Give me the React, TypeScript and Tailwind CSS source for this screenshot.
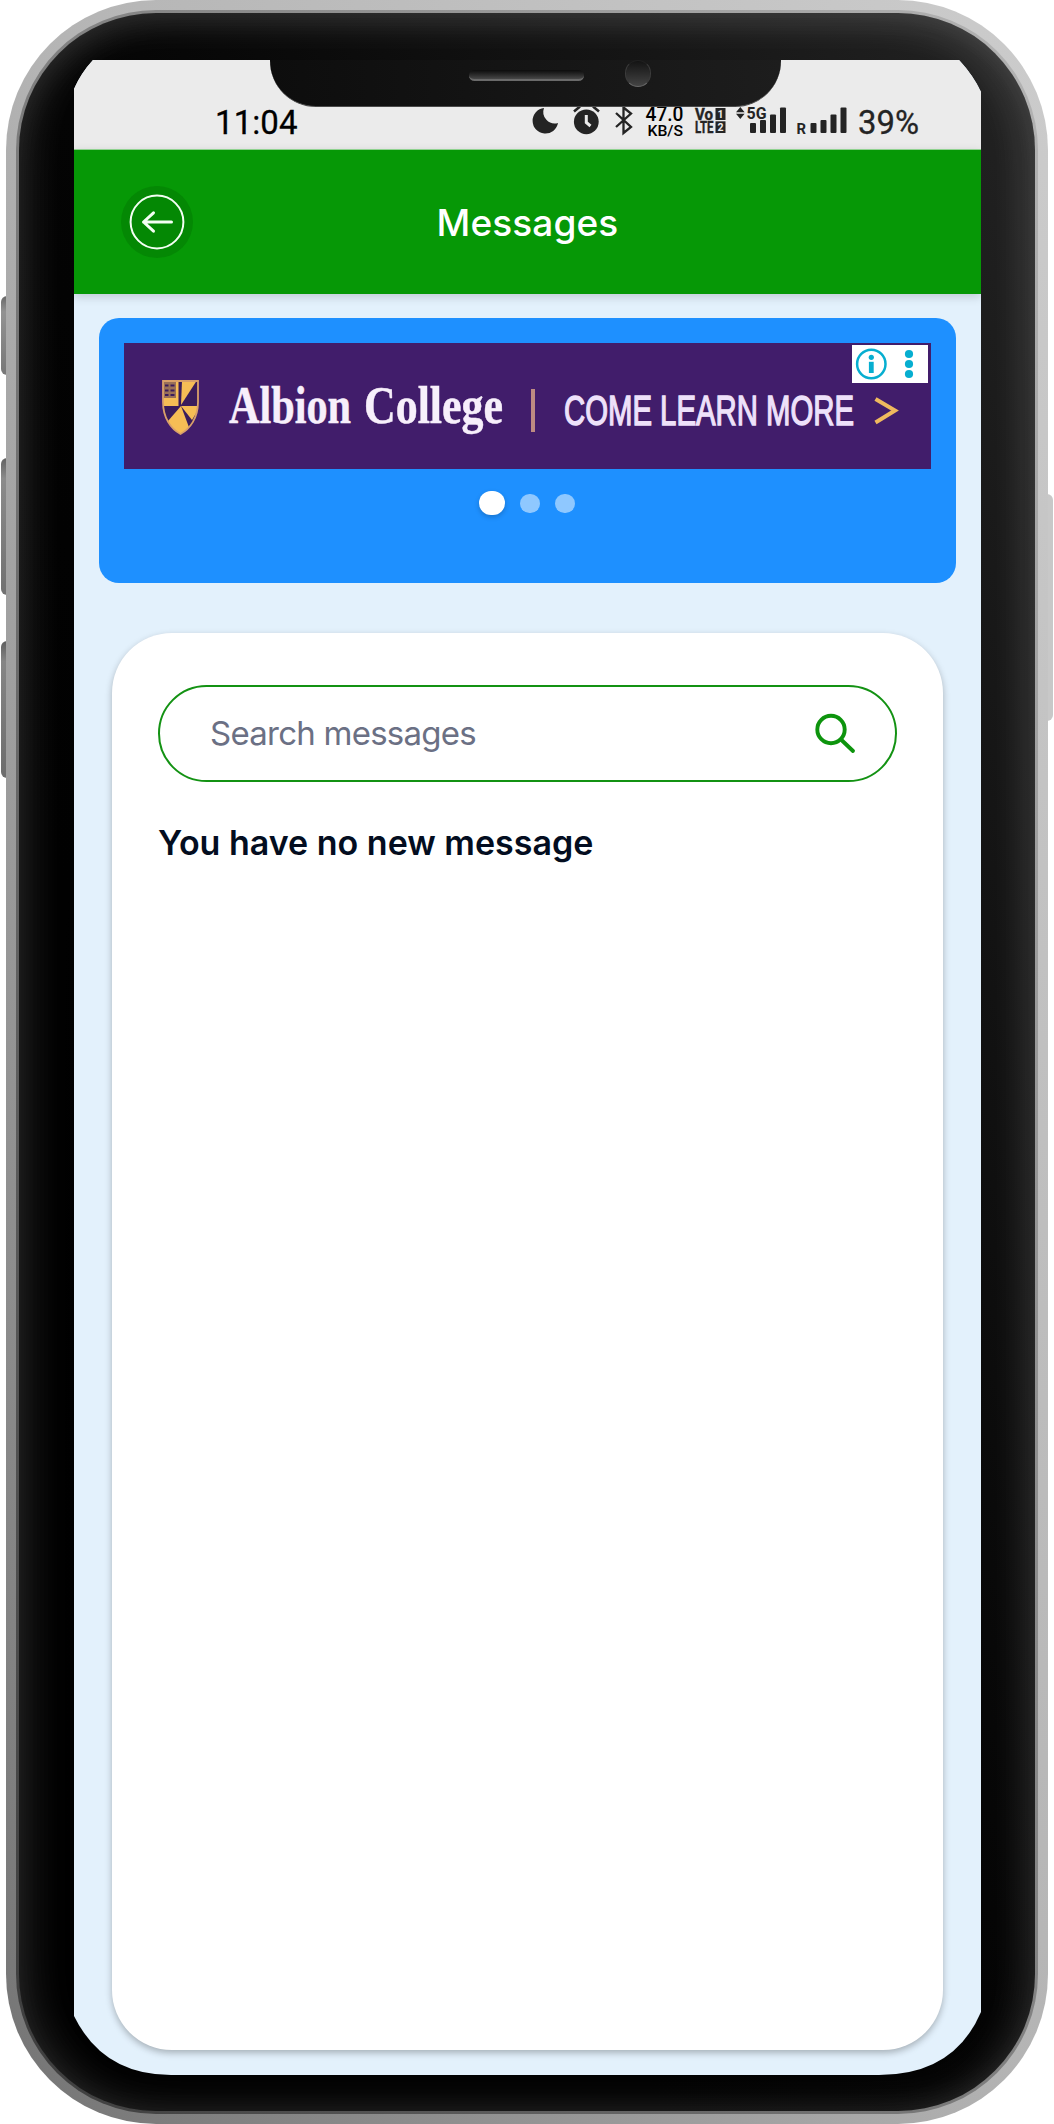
import React from "react";

const INK = "#242424";

function StatusIcon({ x, w, children }: { x: number; w: number; children: React.ReactNode }) {
  return (
    <svg width={w} height="36" viewBox={`${x} 103 ${w} 36`} className="block shrink-0 overflow-visible">
      {children}
    </svg>
  );
}

function Bars({ x }: { x: number }) {
  return (
    <g fill={INK}>
      <rect x={x} y="123" width="6" height="10" rx="1" />
      <rect x={x + 10} y="120" width="6" height="13" rx="1" />
      <rect x={x + 20} y="114.5" width="6" height="18.5" rx="1" />
      <rect x={x + 30} y="107.5" width="6" height="25.5" rx="1" />
    </g>
  );
}

function StatusBar() {
  return (
    <div className="flex h-[89px] items-start bg-[#ebebeb] pl-[140px] pt-[43px]">
      <StatusIcon x={214} w={319}>
        <text x="215" y="134" fontFamily="Roboto" fontSize="33" fill="#000" stroke="#000" strokeWidth="0.3" textLength="82.5">
          11:04
        </text>
      </StatusIcon>
      <StatusIcon x={533} w={40}>
        <path d="M544 108 A12.8 12.8 0 1 0 558 123 A11.5 11.5 0 0 1 544 108Z" fill={INK} />
      </StatusIcon>
      <StatusIcon x={573} w={42}>
        <circle cx="586.3" cy="121.8" r="12.4" fill={INK} />
        <path d="M574 111.5L580 106.5M599 111.5L593 106.5" stroke={INK} strokeWidth="2.6" />
        <path d="M586.3 115V122.5L590.5 126" fill="none" stroke="#ebebeb" strokeWidth="3" />
      </StatusIcon>
      <StatusIcon x={615} w={30}>
        <path d="M616 113L631 127L623.5 133V107.5L631 113.5L616 127" fill="none" stroke={INK} strokeWidth="2.3" />
      </StatusIcon>
      <StatusIcon x={645} w={49}>
        <text x="645.5" y="121" fontFamily="Roboto" fontWeight="500" fontSize="20" fill="#000" textLength="38" lengthAdjust="spacingAndGlyphs">
          47.0
        </text>
        <text x="647.5" y="135.7" fontFamily="Roboto" fontWeight="500" fontSize="15.5" fill="#000" textLength="35.5" lengthAdjust="spacingAndGlyphs">
          KB/S
        </text>
      </StatusIcon>
      <StatusIcon x={694} w={42}>
        <g fontFamily="Roboto" fontWeight="700" fill={INK} stroke={INK} strokeWidth="0.4">
          <text x="695" y="119.8" fontSize="16.5" textLength="18" lengthAdjust="spacingAndGlyphs">Vo</text>
          <text x="695" y="132.8" fontSize="16" textLength="18.5" lengthAdjust="spacingAndGlyphs">LTE</text>
        </g>
        <rect x="715.5" y="108" width="10" height="12" fill={INK} />
        <rect x="715.5" y="121.3" width="10" height="11.7" fill={INK} />
        <g fontFamily="Roboto" fontWeight="700" fontSize="10.5" fill="#ebebeb" textAnchor="middle">
          <text x="720.5" y="117.8">1</text>
          <text x="720.5" y="131">2</text>
        </g>
      </StatusIcon>
      <StatusIcon x={736} w={60}>
        <path d="M736 112.2L740.3 107L744.6 112.2ZM736 113.8L740.3 119L744.6 113.8Z" fill={INK} />
        <Bars x={750} />
        <text x="746.5" y="118.6" fontFamily="Roboto" fontWeight="700" fontSize="16.5" fill={INK} stroke="#ebebeb" strokeWidth="2" paintOrder="stroke" textLength="20" lengthAdjust="spacingAndGlyphs">
          5G
        </text>
      </StatusIcon>
      <StatusIcon x={796} w={62}>
        <text x="796.5" y="133.5" fontFamily="Roboto" fontWeight="700" fontSize="15" fill={INK} textLength="9.5" lengthAdjust="spacingAndGlyphs">
          R
        </text>
        <Bars x={810.5} />
      </StatusIcon>
      <StatusIcon x={858} w={62}>
        <text x="858" y="133.7" fontFamily="Roboto" fontSize="32.5" fill={INK} stroke={INK} strokeWidth="0.3" textLength="61" lengthAdjust="spacingAndGlyphs">
          39%
        </text>
      </StatusIcon>
    </div>
  );
}

function Header() {
  return (
    <header className="relative z-10 grid h-[145px] grid-cols-[1fr_auto_1fr] items-center border-t border-[#8fd28f] bg-[#069806] px-[47px] shadow-[0_3px_9px_rgba(0,0,0,0.16)]">
      <button className="flex size-[72px] items-center justify-center rounded-full bg-[#048804]">
        <svg width="56" height="56" viewBox="0 0 56 56" fill="none" stroke="#f4fff4" strokeLinecap="round" strokeLinejoin="round">
          <circle cx="28" cy="28" r="26.400" strokeWidth="2" />
          <path d="M42.500 28H14.500M24.500 18.800L14.500 28L24.500 37.200" strokeWidth="3" />
        </svg>
      </button>
      <h1 className="whitespace-nowrap font-['Inter'] text-[37px] font-medium leading-none tracking-[0.1px] text-white">Messages</h1>
      <span />
    </header>
  );
}

function Banner() {
  return (
    <div className="relative h-[126px] bg-[#411d6b]">
      <svg width="807" height="126" viewBox="124 343 807 126" className="block overflow-visible">
        <defs>
          <clipPath id="crest">
            <path d="M163 381H198V402C198 418 190 429 180.500 434C171 429 163 418 163 402Z" />
          </clipPath>
        </defs>
        <g clipPath="url(#crest)">
          <rect x="162" y="380" width="38" height="56" fill="#3a1c5c" />
          <path d="M182 381H196.500L181 405Z" fill="#f6bd55" />
          <path d="M163 398H176V382H178.500V406H163Z" fill="#f6bd55" />
          <path d="M181 406H198V410L192 420Z" fill="#f6bd55" />
          <path d="M181 406L168 421L173 430L181 436Z" fill="#f6bd55" />
          <path d="M181 406L181 436L190 430Z" fill="#f6bd55" />
          <rect x="163" y="382" width="13" height="16" fill="#9a7058" />
          <path d="M165 385.500H168.500M170.500 385.500H174.500M165 390.500H168.500M170.500 390.500H174.500M165 395H168.500M170.500 395H174.500" stroke="#3a1c5c" strokeWidth="2.200" />
        </g>
        <path d="M163 381H198V402C198 418 190 429 180.500 434C171 429 163 418 163 402Z" fill="none" stroke="#d9a06a" strokeWidth="1.800" />
        <text x="229" y="422.500" fontFamily="Liberation Serif" fontWeight="700" fontSize="53" fill="#f7effb" stroke="#f7effb" strokeWidth="0.500" textLength="122" lengthAdjust="spacingAndGlyphs">
          Albion
        </text>
        <text x="364" y="422.500" fontFamily="Liberation Serif" fontWeight="700" fontSize="53" fill="#f7effb" stroke="#f7effb" strokeWidth="0.500" textLength="139" lengthAdjust="spacingAndGlyphs">
          College
        </text>
        <rect x="531" y="389" width="4" height="43" fill="#bd8b82" />
        <text x="564" y="425" fontFamily="Liberation Sans" fontSize="42" fill="#eee1fa" stroke="#eee1fa" strokeWidth="1.400" textLength="290" lengthAdjust="spacingAndGlyphs">
          COME LEARN MORE
        </text>
        <path d="M875.500 399L895 410.500L875.500 422.500" fill="none" stroke="#efb95e" strokeWidth="4" />
      </svg>
      <div className="absolute right-[3px] top-[2px] flex h-[38px] w-[76px] items-center bg-white">
        <svg width="76" height="38" viewBox="852 345 76 38" fill="#06aed0">
          <circle cx="871.300" cy="364" r="14.200" fill="none" stroke="#06aed0" strokeWidth="2.500" />
          <circle cx="871.300" cy="357.300" r="2.600" />
          <rect x="868.900" y="361.800" width="4.800" height="11.200" />
          <circle cx="909" cy="354" r="4.100" />
          <circle cx="909" cy="364" r="4.100" />
          <circle cx="909" cy="374" r="4.100" />
        </svg>
      </div>
    </div>
  );
}

function Carousel() {
  return (
    <section className="mx-[25px] h-[265px] rounded-[20px] bg-[#1e90ff] px-[25px] pt-[25px]">
      <Banner />
      <div className="mr-px mt-[22px] flex items-center justify-center gap-[15px]">
        <span className="h-6 w-[26px] rounded-full bg-white shadow-[0_2px_5px_rgba(0,0,0,0.2)]" />
        <span className="h-[19px] w-5 rounded-full bg-[#8fc8ff]" />
        <span className="h-[19px] w-5 rounded-full bg-[#8fc8ff]" />
      </div>
    </section>
  );
}

function MessagesCard() {
  return (
    <section className="mx-[38px] mt-[50px] h-[1417px] rounded-[60px] bg-white px-[46px] pt-[52px] shadow-[0_3px_7px_rgba(0,0,0,0.27)]">
      <div className="flex h-[97px] items-center justify-between rounded-full border-[2.5px] border-[#139213] pl-[50px] pr-[39px]">
        <span className="whitespace-nowrap font-['Inter'] text-[33px] leading-none tracking-[-0.75px] text-[#6b7084]">Search messages</span>
        <svg width="42" height="42" viewBox="813 713 42 42" fill="none" stroke="#0d940d" strokeWidth="3.900" strokeLinecap="round">
          <circle cx="830" cy="729.500" r="13.700" />
          <path d="M840.500 740L852 751" />
        </svg>
      </div>
      <p className="mt-[43px] whitespace-nowrap font-['Inter'] text-[34px] font-semibold leading-[36px] text-[#030d20]">You have no new message</p>
    </section>
  );
}

function Notch() {
  return (
    <div className="absolute left-[196px] top-0 h-[47px] w-[511px] rounded-b-[46px] border-b border-[#4a4a4a] bg-linear-to-r from-[#0d0d0d] to-[#1d1d1d]">
      <div className="absolute left-[199px] top-[10px] h-[11px] w-[115px] rounded-full border-b-2 border-[#6a6a6a] bg-linear-to-b from-[#0c0c0c] to-[#484848]" />
      <div className="absolute left-[355px] top-0 h-[27px] w-[26px] rounded-full border border-t-[#202020] border-x-[#3c3c3c] border-b-[#686868] bg-linear-to-b from-[#141414] to-[#444444]" />
    </div>
  );
}

export default function App() {
  return (
    <main className="relative h-[2124px] w-[1054px] overflow-hidden bg-white pl-[6px]">
      <div className="absolute left-px top-[296px] h-[79px] w-3 rounded-l-[6px] bg-linear-to-b from-[#686868] via-[#929292] via-20% to-[#777777]" />
      <div className="absolute left-px top-[458px] h-[137px] w-3 rounded-l-[6px] bg-linear-to-b from-[#626262] via-[#8b8b8b] via-15% to-[#707070]" />
      <div className="absolute left-px top-[641px] h-[137px] w-3 rounded-l-[6px] bg-linear-to-b from-[#5e5e5e] via-[#858585] via-15% to-[#6c6c6c]" />
      <div className="absolute left-[1040px] top-[494px] h-[227px] w-[13px] rounded-r-[6px] bg-[#c8c8c8]" />

      <div className="relative h-[2124px] w-[1042px] rounded-[150px] bg-linear-to-tr from-[#747474] via-[#b4b4b4] to-[#cccccc] p-[10px]">
        <div className="h-[2104px] w-[1022px] rounded-[140px] bg-linear-to-tr from-[#3c3c3c] via-[#808080] to-[#b4b4b4] p-[3px]">
          <div className="h-[2098px] w-[1016px] rounded-[137px] bg-linear-to-tr from-black via-[#040404] to-[#242424] pl-[55px] pt-[47px] shadow-[inset_0_0_50px_rgba(255,255,255,0.1),inset_16px_0_40px_rgba(255,255,255,0.06),inset_-12px_10px_40px_rgba(255,255,255,0.08)]">
            <div className="relative h-[2015px] w-[907px] bg-[#e3f1fc] [clip-path:path('M19_0H885Q899_15_907_32V1952Q880_2015_805_2015H97Q29_2015_0_1956V29Q7_13_19_0Z')]">
              <StatusBar />
              <Header />
              <div className="h-6" />
              <Carousel />
              <MessagesCard />
              <Notch />
            </div>
          </div>
        </div>
      </div>
    </main>
  );
}
